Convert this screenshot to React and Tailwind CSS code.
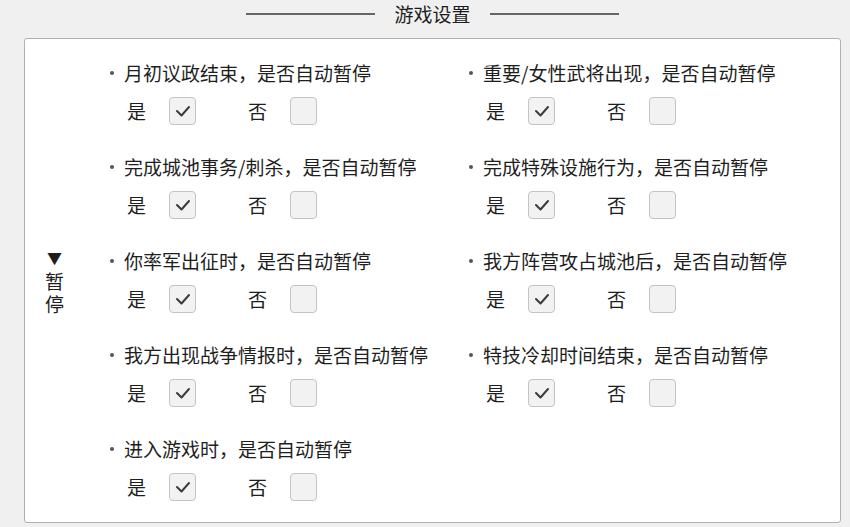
import React from "react";

const items = [
  "月初议政结束，是否自动暂停",
  "重要/女性武将出现，是否自动暂停",
  "完成城池事务/刺杀，是否自动暂停",
  "完成特殊设施行为，是否自动暂停",
  "你率军出征时，是否自动暂停",
  "我方阵营攻占城池后，是否自动暂停",
  "我方出现战争情报时，是否自动暂停",
  "特技冷却时间结束，是否自动暂停",
  "进入游戏时，是否自动暂停",
];

function Box({ checked }) {
  return (
    <div className="w-[27px] h-[28px] rounded-[4px] border border-[#c4c4c4] bg-[#f2f2f2] flex items-center justify-center">
      {checked && (
        <svg width="16" height="14" viewBox="0 0 16 14">
          <polyline points="2,7 6.5,11.5 14,3" fill="none" stroke="#3c3c3c" strokeWidth="2" strokeLinecap="round" strokeLinejoin="round" />
        </svg>
      )}
    </div>
  );
}

function Item({ text }) {
  return (
    <div className="w-[359px] flex flex-col">
      <div className="flex items-center h-[24px]">
        <span className="w-[16px] flex items-center pl-[2px]">
          <span className="w-[4px] h-[4px] rounded-full bg-[#555]" />
        </span>
        <span>{text}</span>
      </div>
      <div className="flex items-center h-[28px] mt-[12px] pl-[19px]">
        <span>是</span>
        <div className="ml-[23px]"><Box checked /></div>
        <span className="ml-[52px]">否</span>
        <div className="ml-[23px]"><Box /></div>
      </div>
    </div>
  );
}

export default function App() {
  return (
    <div
      className="w-[850px] h-[527px] bg-[#f0f0f0] text-[#1e1e1e] text-[19px] flex flex-col"
      style={{ fontFamily: '"Noto Sans CJK SC", "Noto Sans", sans-serif' }}
    >
      <div className="h-[38px] flex items-start justify-center pl-[15px] pt-[2px]">
        <div className="w-[129px] h-[2px] bg-[#666] mt-[11px]" />
        <span className="mx-[19px] leading-[24px]">游戏设置</span>
        <div className="w-[129px] h-[2px] bg-[#666] mt-[11px]" />
      </div>
      <div className="ml-[24px] w-[817px] h-[485px] bg-white border border-[#b0b0b0] rounded-[3px] flex">
        <div className="w-[59px] flex flex-col items-center justify-center">
          <span className="text-[15px] leading-[22px]">▼</span>
          <span className="leading-[23px]">暂</span>
          <span className="leading-[23px]">停</span>
        </div>
        <div className="pl-[24px] pt-[22px] grid grid-cols-[359px_359px] gap-y-[30px] content-start">
          {items.map((t) => (
            <Item key={t} text={t} />
          ))}
        </div>
      </div>
    </div>
  );
}
